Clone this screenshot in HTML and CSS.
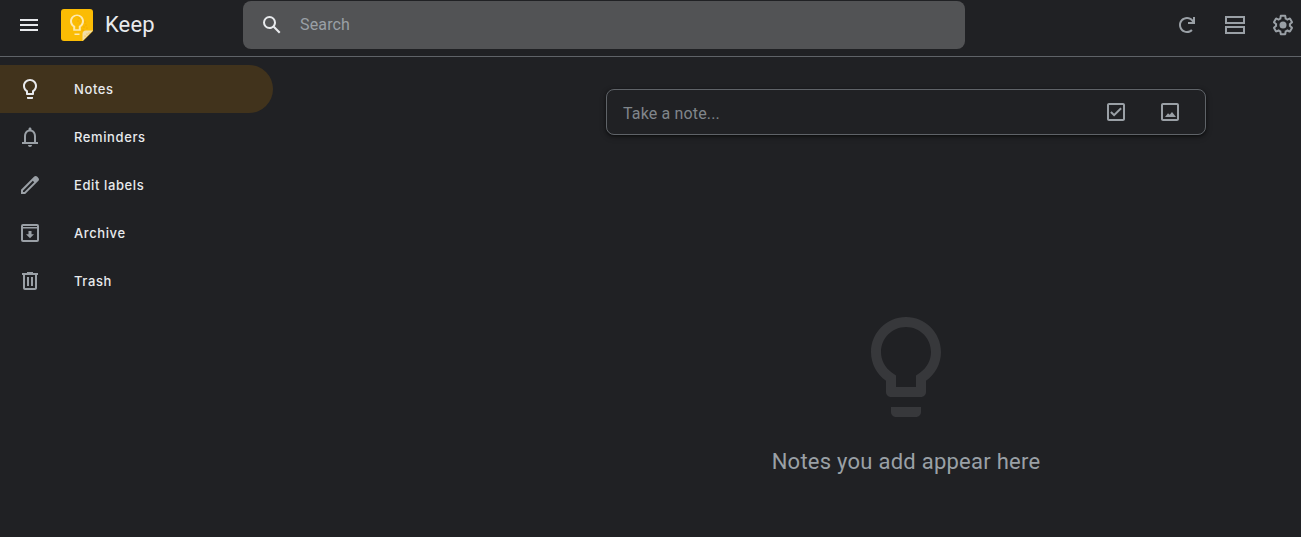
FILE: index.html
```html
<!DOCTYPE html>
<html lang="en">
<head>
<meta charset="utf-8">
<title>Keep</title>
<link rel="stylesheet" href="styles.css">
</head>
<body>
<header class="topbar">
  <svg class="icon menu-icon" viewBox="0 0 24 24"><path d="M3 18h18v-2H3v2zm0-5h18v-2H3v2zm0-7v2h18V6H3z"/></svg>
  <svg class="logo" viewBox="0 0 32 32">
    <path class="logo-sheet" d="M3 0h26a3 3 0 0 1 3 3v19L22 32H3a3 3 0 0 1-3-3V3a3 3 0 0 1 3-3z"/>
    <path class="logo-fold" d="M32 21.500L21.500 32v-7a3.500 3.500 0 0 1 3.500-3.500z"/>
    <g class="logo-dots">
      <circle cx="18" cy="9" r=".6"/><circle cx="20" cy="11" r=".6"/><circle cx="17" cy="12" r=".6"/><circle cx="19" cy="14" r=".6"/>
      <circle cx="24" cy="13" r=".6"/><circle cx="25" cy="16" r=".6"/><circle cx="23" cy="18" r=".6"/><circle cx="26" cy="19" r=".6"/><circle cx="22" cy="21" r=".6"/>
      <circle cx="24" cy="27" r=".5"/><circle cx="26" cy="25" r=".5"/><circle cx="28" cy="24" r=".5"/>
    </g>
    <path class="logo-bulb" d="M13.500 24.500h5V26h-5zM16 5.500c-4 0-7 3-7 6.800 0 2.500 1.200 4.500 3.200 5.700v3.800h7.600V18c2-1.200 3.200-3.200 3.200-5.700 0-3.800-3-6.800-7-6.800zm2.300 11.300l-.5.300v3.200h-3.600v-3.200l-.5-.3c-1.600-1-2.700-2.600-2.700-4.500 0-2.800 2.200-5.300 5-5.300s5 2.500 5 5.300c0 1.900-1.100 3.500-2.700 4.500z"/>
  </svg>
  <span class="brand">Keep</span>
  <div class="search">
    <svg class="icon search-icon" viewBox="0 0 24 24"><path d="M20.490 19l-5.730-5.730C15.530 12.200 16 10.910 16 9.500A6.500 6.500 0 1 0 9.500 16c1.410 0 2.700-.47 3.770-1.240L19 20.490 20.490 19zM5 9.500C5 7.010 7.010 5 9.500 5S14 7.010 14 9.500 11.990 14 9.500 14 5 11.990 5 9.500z"/></svg>
    <span class="search-text">Search</span>
  </div>
  <div class="actions">
    <svg class="icon" viewBox="0 0 24 24"><path d="M13 9v2h7V4h-2v2.740C16.530 5.070 14.400 4 12 4c-2.210 0-4.210.9-5.660 2.340S4 9.790 4 12c0 4.420 3.580 8 8 8 2.210 0 4.210-.9 5.650-2.340l-1.420-1.420A5.980 5.980 0 0 1 12 18c-3.310 0-6-2.690-6-6 0-1.650.67-3.150 1.760-4.240A5.980 5.980 0 0 1 12 6a6.010 6.010 0 0 1 5.190 3H13z"/></svg>
    <svg class="icon" viewBox="0 0 24 24"><path d="M2 3h20v8H2zm2 2v4h16V5zM2 13h20v8H2zm2 2v4h16v-4z" fill-rule="evenodd"/></svg>
    <svg class="icon" viewBox="0 0 24 24"><circle cx="12" cy="12" r="3.500"/><path d="M13.850 22.250h-3.700c-.74 0-1.360-.54-1.450-1.270l-.27-1.890c-.27-.14-.53-.29-.79-.46l-1.800.72c-.7.26-1.470-.03-1.810-.65L2.200 15.530c-.35-.66-.2-1.440.36-1.880l1.530-1.190c-.01-.15-.02-.3-.02-.46 0-.15.01-.31.02-.46l-1.520-1.190c-.59-.45-.74-1.260-.37-1.880l1.850-3.190c.34-.62 1.110-.9 1.790-.63l1.810.73c.26-.17.52-.32.78-.46l.27-1.910c.09-.7.71-1.250 1.440-1.250h3.700c.74 0 1.360.54 1.450 1.270l.27 1.890c.27.14.53.29.79.46l1.800-.72c.71-.26 1.480.03 1.820.65l1.840 3.180c.36.66.2 1.440-.36 1.880l-1.520 1.190c.01.15.02.3.02.46s-.01.31-.02.46l1.520 1.190c.56.45.72 1.230.37 1.860l-1.860 3.220c-.34.62-1.110.9-1.800.63l-1.800-.72c-.26.17-.52.32-.78.46l-.27 1.910c-.1.68-.72 1.220-1.460 1.220zm-3.230-2h2.760l.37-2.550.53-.22c.44-.18.88-.44 1.340-.78l.45-.34 2.380.96 1.380-2.400-2.030-1.580.07-.56c.03-.26.06-.51.06-.78s-.03-.53-.06-.78l-.07-.56 2.030-1.580-1.390-2.400-2.390.96-.45-.35c-.42-.32-.87-.58-1.330-.77l-.52-.22-.37-2.550h-2.760l-.37 2.550-.53.21c-.44.19-.88.44-1.340.79l-.45.33-2.380-.95-1.390 2.390 2.030 1.580-.07.56a7 7 0 0 0-.06.79c0 .26.02.53.06.78l.07.56-2.030 1.580 1.380 2.400 2.390-.96.45.35c.43.33.86.58 1.330.77l.53.22.38 2.550z"/></svg>
  </div>
</header>
<div class="layout">
  <nav class="sidebar">
    <a class="nav-item active">
      <svg class="icon" viewBox="0 0 24 24"><path d="M9 21c0 .55.45 1 1 1h4c.55 0 1-.45 1-1v-1H9v1zm3-19C8.140 2 5 5.140 5 9c0 2.380 1.190 4.470 3 5.740V17c0 .55.45 1 1 1h6c.55 0 1-.45 1-1v-2.260c1.810-1.270 3-3.360 3-5.740 0-3.860-3.140-7-7-7zm2.850 11.100l-.85.6V16h-4v-2.300l-.85-.6C7.800 12.160 7 10.630 7 9c0-2.760 2.240-5 5-5s5 2.240 5 5c0 1.630-.8 3.160-2.150 4.100z"/></svg>
      <span>Notes</span>
    </a>
    <a class="nav-item">
      <svg class="icon" viewBox="0 0 24 24"><path d="M18 17v-6c0-3.070-1.630-5.640-4.500-6.320V4c0-.83-.67-1.500-1.500-1.500s-1.500.67-1.500 1.500v.68C7.640 5.360 6 7.920 6 11v6H4v2h16v-2h-2zm-2 0H8v-6c0-2.480 1.510-4.500 4-4.500s4 2.020 4 4.500v6zm-4 5c1.100 0 2-.9 2-2h-4c0 1.100.9 2 2 2z"/></svg>
      <span>Reminders</span>
    </a>
    <a class="nav-item">
      <svg class="icon" viewBox="0 0 24 24"><path d="M20.410 4.940l-1.350-1.350c-.78-.78-2.050-.78-2.830 0L3 16.820V21h4.180L20.410 7.770c.79-.78.79-2.050 0-2.830zm-14 14.120L5 19v-1.360l9.820-9.820 1.410 1.410-9.820 9.830z"/></svg>
      <span>Edit labels</span>
    </a>
    <a class="nav-item">
      <svg class="icon" viewBox="0 0 24 24"><path fill-rule="evenodd" d="M5 3h14a2 2 0 0 1 2 2v14a2 2 0 0 1-2 2H5a2 2 0 0 1-2-2V5a2 2 0 0 1 2-2zm0 2v1h14V5zm0 2.500V19h14V7.500z"/><path d="M10.500 10h3v3.300H16l-4 4-4-4h2.500z"/></svg>
      <span>Archive</span>
    </a>
    <a class="nav-item">
      <svg class="icon" viewBox="0 0 24 24"><path d="M15 4V3H9v1H4v2h1v13c0 1.100.9 2 2 2h10c1.100 0 2-.9 2-2V6h1V4h-5zm2 15H7V6h10v13zM9 8h2v9H9zm4 0h2v9h-2z"/></svg>
      <span>Trash</span>
    </a>
  </nav>
  <main class="content">
    <div class="note-box">
      <span class="note-text">Take a note...</span>
      <div class="note-tools">
        <svg class="icon" viewBox="0 0 24 24"><path d="M19 3H5c-1.100 0-2 .9-2 2v14c0 1.100.9 2 2 2h14c1.100 0 2-.9 2-2V5c0-1.100-.9-2-2-2zm0 16H5V5h14v14z"/><path d="M17.800 8.900l-1.400-1.400-6.300 6.300-2.500-2.500-1.400 1.400 3.900 3.900z"/></svg>
        <svg class="icon" viewBox="0 0 24 24"><path d="M19 5v14H5V5h14m0-2H5c-1.100 0-2 .9-2 2v14c0 1.100.9 2 2 2h14c1.100 0 2-.9 2-2V5c0-1.100-.9-2-2-2z"/><path d="M14 12l-2.300 2.700-1.700-1.400L7 17h11z"/></svg>
      </div>
    </div>
    <div class="empty">
      <svg class="empty-icon" viewBox="0 0 24 24"><path d="M9 21c0 .55.45 1 1 1h4c.55 0 1-.45 1-1v-1H9v1zm3-19C8.140 2 5 5.140 5 9c0 2.380 1.190 4.470 3 5.740V17c0 .55.45 1 1 1h6c.55 0 1-.45 1-1v-2.260c1.810-1.270 3-3.360 3-5.740 0-3.860-3.140-7-7-7zm2.850 11.100l-.85.6V16h-4v-2.300l-.85-.6C7.800 12.160 7 10.630 7 9c0-2.760 2.240-5 5-5s5 2.240 5 5c0 1.630-.8 3.160-2.150 4.100z"/></svg>
      <p class="empty-text">Notes you add appear here</p>
    </div>
  </main>
</div>
</body>
</html>
```
FILE: styles.css
```css
* { box-sizing: border-box; }
html, body { height: 100%; }
body {
  margin: 0;
  background: #202124;
  color: #e8eaed;
  font-family: Roboto, "Liberation Sans", sans-serif;
  overflow: hidden;
}
.icon { width: 24px; height: 24px; fill: #9aa0a6; flex: none; display: block; }
.topbar {
  height: 57px;
  border-bottom: 1px solid #5f6368;
  display: flex;
  align-items: flex-start;
  padding: 1px 6px 0 17px;
}
.menu-icon { fill: #e8eaed; margin: 12px 0 0 0; }
.logo { width: 32px; height: 32px; margin: 8px 0 0 20px; flex: none; }
.logo-sheet { fill: #fbbc04; }
.logo-fold { fill: #f3dfa6; }
.logo-dots { fill: #ea9a00; }
.logo-bulb { fill: #fde9b0; }
.brand {
  font-size: 22px;
  line-height: 32px;
  margin: 8px 0 0 12px;
  width: 138px;
  color: #e8eaed;
  letter-spacing: .1px;
}
.search {
  width: 722px;
  height: 48px;
  background: #525355;
  border-radius: 8px;
  display: flex;
  align-items: center;
  padding-left: 17px;
}
.search-icon { fill: #e8eaed; }
.search-text { margin: -2px 0 0 16px; font-size: 16px; letter-spacing: .15px; color: #9aa0a6; }
.actions { margin-left: auto; display: flex; gap: 24px; padding-top: 12px; }
.layout { display: grid; grid-template-columns: 511px 1fr; }
.sidebar { padding-top: 8px; display: flex; flex-direction: column; }
.nav-item {
  width: 273px;
  height: 48px;
  display: flex;
  align-items: center;
  padding-left: 18px;
  gap: 32px;
  font-family: Inter, Roboto, sans-serif;
  font-size: 13px;
  font-weight: 500;
  letter-spacing: .6px;
  color: #e8eaed;
  border-radius: 0 24px 24px 0;
}
.nav-item.active { background: #41331c; }
.nav-item.active .icon { fill: #e8eaed; }
.content { padding-top: 32px; display: flex; flex-direction: column; align-items: center; }
.note-box {
  width: 600px;
  height: 46px;
  border: 1px solid #5f6368;
  border-radius: 8px;
  box-shadow: 0 1px 3px rgba(0,0,0,.5), 0 2px 6px rgba(0,0,0,.3);
  display: flex;
  align-items: center;
  padding: 0 23px 0 16px;
}
.note-text { margin-top: 2px; font-size: 16px; letter-spacing: .15px; color: #80868b; }
.note-tools { margin-left: auto; display: flex; gap: 30px; }
.empty { margin-top: 172px; display: flex; flex-direction: column; align-items: center; }
.empty-icon { width: 120px; height: 120px; fill: #37383b; display: block; }
.empty-text { margin: 21px 0 0; font-size: 22px; line-height: 28px; letter-spacing: .25px; color: #9aa0a6; }
```
